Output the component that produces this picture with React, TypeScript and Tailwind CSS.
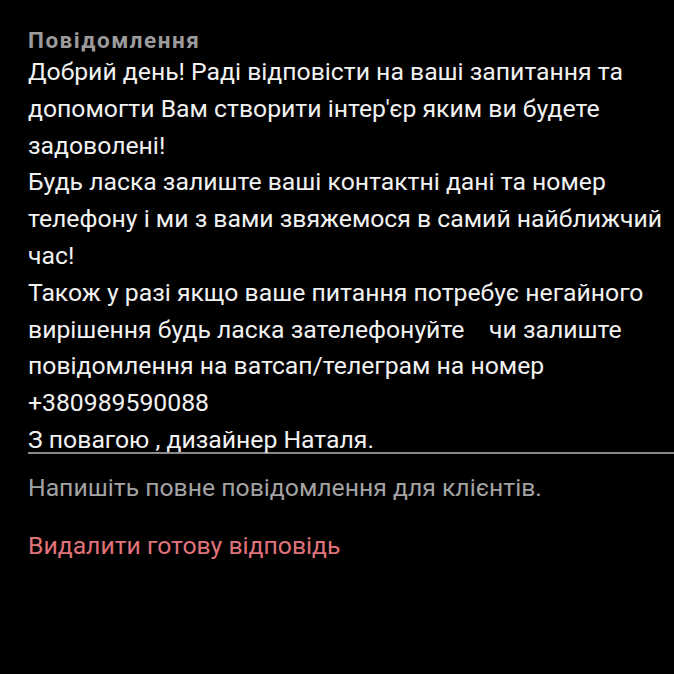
import React from "react";

const lines = [
  "Добрий день! Раді відповісти на ваші запитання та",
  "допомогти Вам створити інтер'єр яким ви будете",
  "задоволені!",
  "Будь ласка залиште ваші контактні дані та номер",
  "телефону і ми з вами звяжемося в самий найближчий",
  "час!",
  "Також у разі якщо ваше питання потребує негайного",
  "вирішення будь ласка зателефонуйте \u00a0\u00a0 чи залиште",
  "повідомлення на ватсап/телеграм на номер",
  "+380989590088",
  "З повагою , дизайнер Наталя.",
];

export default function App() {
  return (
    <div className="w-[674px] h-[674px] bg-black overflow-hidden" style={{ fontFamily: "Roboto, 'Noto Sans', sans-serif" }}>
      <div className="pl-[28px] pt-[26px]">
        <div className="text-[22.5px] font-bold text-[#9b9b9b] leading-[28px] tracking-[1.5px]">Повідомлення</div>
        <div className="text-[#f2f2f2] text-[24.75px] leading-[36.8px]">
          {lines.map((l, i) => (
            <div key={i} className="whitespace-pre">{l}</div>
          ))}
        </div>
        <div className="h-[2px] bg-[#8a8a8a] -mt-[7px]"></div>
        <div className="text-[#a3a3a3] text-[24.75px] leading-[36px] mt-[16px] whitespace-pre">Напишіть повне повідомлення для клієнтів.</div>
        <div className="text-[#e0737a] text-[24.75px] leading-[36px] mt-[22px] whitespace-pre">Видалити готову відповідь</div>
      </div>
    </div>
  );
}
